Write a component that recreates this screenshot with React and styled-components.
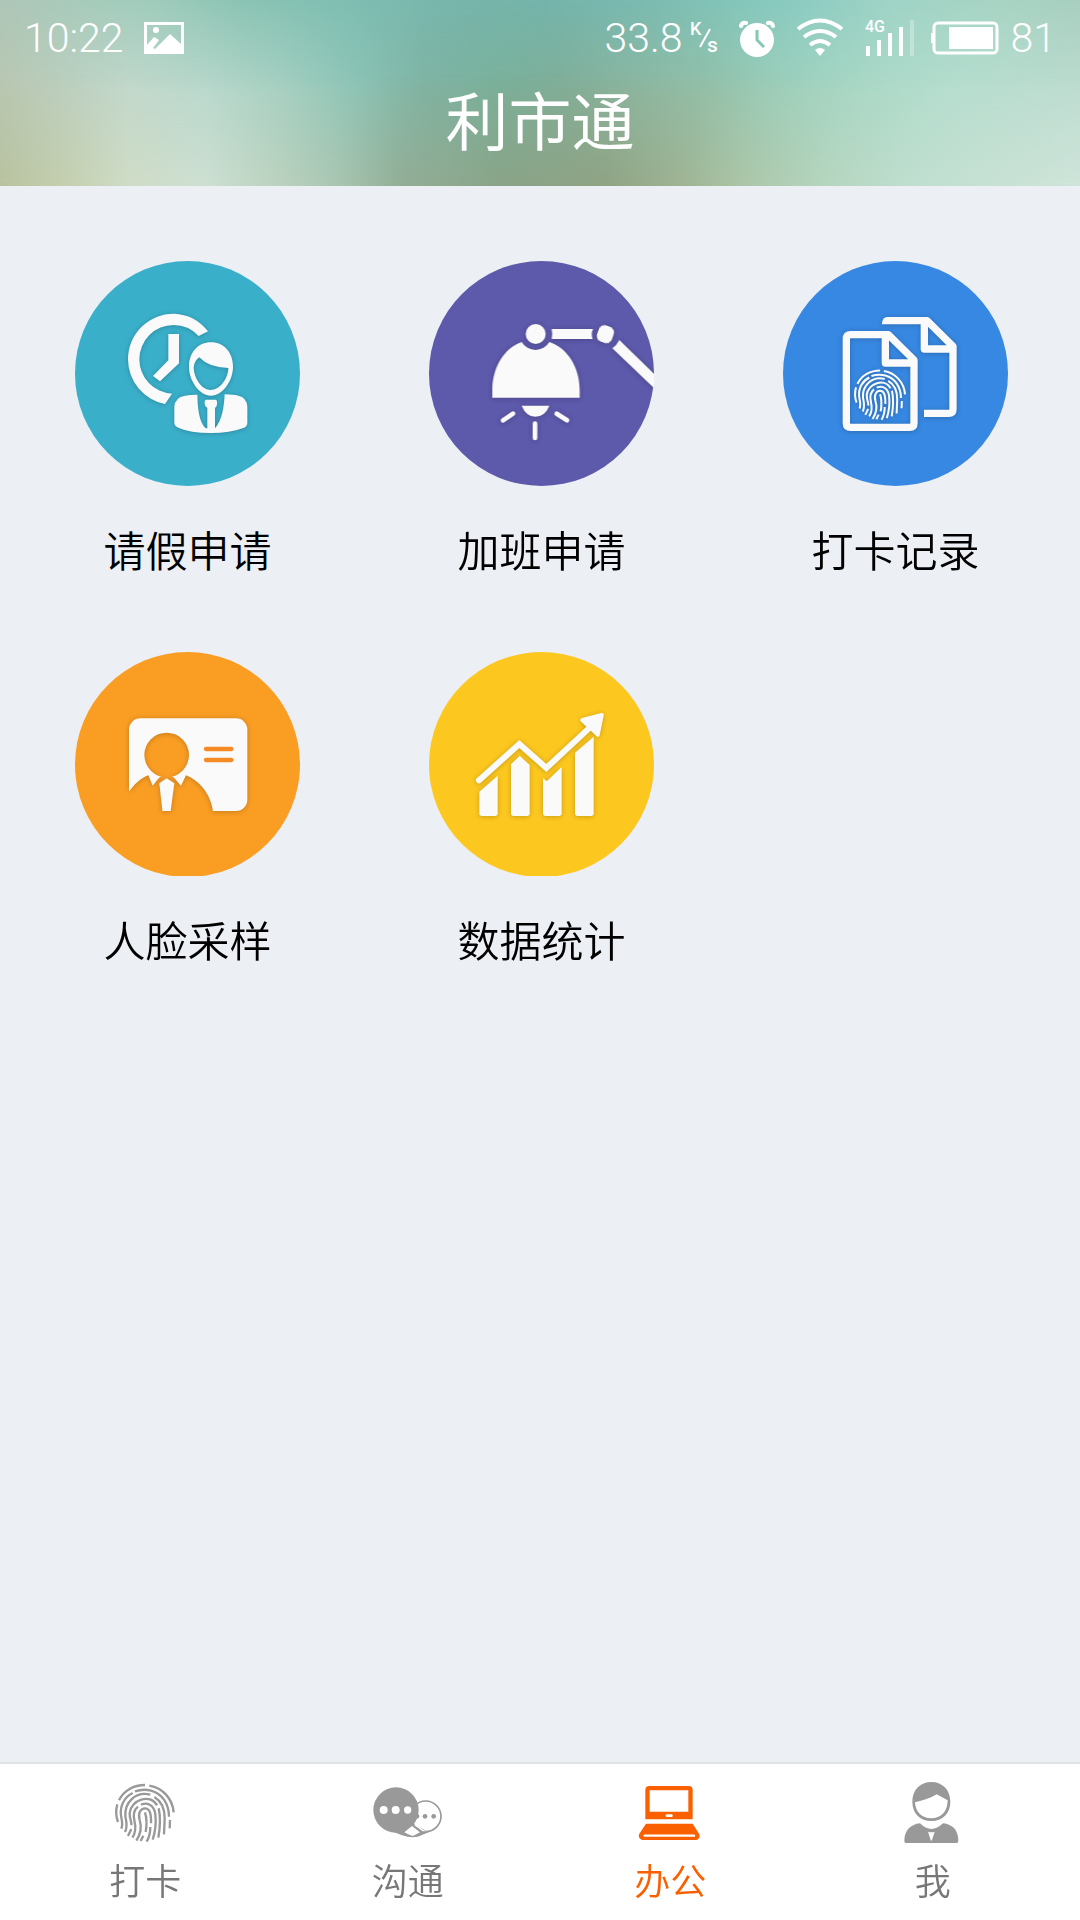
import React from 'react';
import styled, { createGlobalStyle } from 'styled-components';

const GlobalStyle = createGlobalStyle`
  *, *::before, *::after { box-sizing: border-box; }
  body {
    margin: 0;
    background: #eceff3;
    font-family: Roboto, "Noto Sans CJK SC", sans-serif;
    font-weight: 350;
  }
`;

const Screen = styled.div`
  display: flex;
  flex-direction: column;
  min-height: 100vh;
`;

const Header = styled.header`
  position: relative;
  isolation: isolate;
  padding-bottom: 14px;
  color: #fff;
  background: linear-gradient(90deg, #afc6b8 0%, #a8cbbb 7%, #a0ccbc 14%, #8cc4b4 22%, #80bfb3 31%, #78b6ac 41%, #74b4aa 50%, #7abab0 59%, #84c6ba 68%, #8cccc2 74%, #a0d4c6 83%, #a8d4c4 93%, #a8cfc0 100%);

  &::before, &::after {
    content: "";
    position: absolute;
    inset: 0;
    z-index: -1;
  }
  &::before {
    background: linear-gradient(90deg, #b9c7b1 0%, #bccfc0 6%, #c2d8cc 12%, #b8d8cc 19%, #a6d0c2 26%, #8cc4b6 33%, #80b4a4 39%, #7ab09a 46%, #80ae98 52%, #8ab49e 57%, #92bfa8 65%, #9cceba 72%, #aad8c6 80%, #b6decf 89%, #bcdccf 100%);
    mask-image: linear-gradient(180deg, transparent 0%, #000 50%);
  }
  &::after {
    background: linear-gradient(90deg, #b8c2a0 0%, #c4cfae 6%, #cfdcc6 12%, #cddfd2 19%, #bdd3c0 25%, #aac6b2 31%, #93ae96 37%, #8aa488 46%, #90a384 56%, #9fb393 63%, #acc6a8 69%, #b6d6c0 77%, #c0dfd0 85%, #c8e1d4 93%, #cfe4da 100%);
    mask-image: linear-gradient(180deg, transparent 40%, #000 100%);
  }
`;

const StatusBar = styled.div`
  display: flex;
  justify-content: space-between;
  align-items: center;
  height: 76px;
  padding: 0 24px;
  font-size: 41px;
  line-height: 48px;
  font-weight: 300;
`;

const StatusGroup = styled.div`
  display: flex;
  align-items: center;
  gap: ${(p) => p.$gap}px;
`;

const Glyph = styled.svg`
  display: block;
  flex: none;
  font-family: Roboto, sans-serif;
  font-weight: 500;
`;

const Title = styled.h1`
  margin: 0;
  text-align: center;
  font-size: 63px;
  line-height: 96px;
  font-weight: 400;
`;

const Content = styled.main`
  flex: 1;
  padding: 75px 72px 70px 75px;
`;

const TileGrid = styled.div`
  display: grid;
  grid-template-columns: repeat(3, 225px);
  justify-content: space-between;
  row-gap: 68px;
`;

const Tile = styled.button`
  display: flex;
  flex-direction: column;
  align-items: center;
  gap: 37px;
  padding: 0;
  border: 0;
  background: none;
  color: #000;
  font: inherit;
  font-size: 42px;
  line-height: 60px;
  cursor: pointer;
`;

const TileArt = styled.svg`
  display: block;
  width: 225px;
  height: 225px;
`;

const Mark = styled.g`
  filter: drop-shadow(0 2px 8px rgba(0, 0, 0, 0.22));
`;

const TabBar = styled.nav`
  display: grid;
  grid-template-columns: repeat(4, 1fr);
  padding: 17px 16px 13px 14px;
  border-top: 2px solid #e1e2e4;
  background: #fff;
`;

const Tab = styled.a`
  display: flex;
  flex-direction: column;
  align-items: center;
  gap: 14px;
  color: ${(p) => (p.$active ? '#fa6000' : '#777')};
  font-size: 36px;
  line-height: 48px;
  text-decoration: none;
`;

const TabArt = styled.svg`
  display: block;
  width: 70px;
  height: 64px;
`;

const ridges = [
  'M90 136 C104 106 135 90 168 90',
  'M181 92 C222 99 251 132 254 172',
  'M85 148 C80 165 81 185 87 201',
  'M97 221 C103 208 98 196 96 182 C92 150 108 125 131 114',
  'M138 109 C170 98 205 106 225 134 C236 150 240 165 240 185',
  'M243 195 L242 220',
  'M108 231 C117 214 112 200 109 184 C106 142 140 108 184 119',
  'M196 126 C220 140 227 165 227 190 L225 238',
  'M117 243 L127 222',
  'M127 211 C129 200 121 192 122 174 C126 134 184 114 204 151',
  'M209 160 C215 188 213 220 208 248',
  'M130 248 C142 232 140 213 136 196 C132 178 137 163 147 155',
  'M156 149 C180 139 196 155 199 178 C202 205 199 230 191 254',
  'M142 257 C156 236 158 214 152 195 C146 174 155 160 168 160 C182 160 187 176 186 205',
  'M184 216 C184 235 180 248 173 260',
  'M168 172 C173 188 174 208 170 231',
  'M163 242 L155 258',
];

const Fingerprint = () => (
  <g fill="none" stroke="currentColor" strokeWidth="7">
    {ridges.map((d) => <path key={d} d={d} />)}
  </g>
);

const Disc = ({ x, y = 370.5, color }) => <circle cx={x + 337.5} cy={y} r="337.5" fill={color} />;

const LeaveArt = () => (
  <TileArt viewBox="15 33 675 675" aria-hidden="true">
    <Disc x={15} color="#3aafca" />
    <Mark fill="#fafafa">
      <path d="M414 244 A137 137 0 0 0 311 191 A137 137 0 0 0 174 328 A137 137 0 0 0 285 462 L306 431 A103 103 0 0 1 208 328 A103 103 0 0 1 311 225 A103 103 0 0 1 386 258 Z" />
      <path d="M295 252 H327 V340 L270 394 L249 378 L295 331 Z" />
      <path fillRule="evenodd" d="M423 277 C462 277 489 308 489 350 C489 392 458 437 423 437 C388 437 357 392 357 350 C357 308 384 277 423 277 Z M388 322 Q415 352 475 354 C475 385 450 420 422 420 C395 420 372 385 371 352 Q374 330 388 322 Z" />
      <path d="M345 437 Q360 434 382 434 C383 470 386 515 407 535 H412 V474 Q404 469 404 461 V455 Q404 449 409 449 H436 Q441 449 441 455 V463 Q441 469 435 474 V535 C457 510 462 470 464 433 Q490 434 505 437 Q530 442 532 470 V518 Q532 530 520 534 Q480 549 423 549 Q360 549 325 533 Q313 528 313 518 V470 Q315 442 345 437 Z" />
    </Mark>
  </TileArt>
);

const OvertimeArt = () => (
  <TileArt viewBox="27 33 675 675" aria-hidden="true">
    <Disc x={27} color="#5d59ab" />
    <Mark fill="#fafafa">
      <circle cx="347" cy="252" r="30" />
      <path d="M217 443 V420 C217 350 255 292 305 276 A48 48 0 0 0 388 276 C440 292 479 350 479 420 V443 Z" />
      <path d="M395 237 H519 Q512 252 518 267 H395 Q398 252 395 237 Z" />
      <rect x="533" y="227" width="47" height="51" rx="17" transform="rotate(20 556 252)" />
      <path d="M577 295 Q590 286 598 270 L708 377 V420 Z" />
      <path d="M305 467 H388 Q375 500 346 500 Q318 500 305 467 Z" />
      <path d="M249 511 L279 491 M410 491 L441 511 M345 521 V564" fill="none" stroke="#fafafa" strokeWidth="14" strokeLinecap="round" />
    </Mark>
  </TileArt>
);

const RecordArt = () => (
  <TileArt viewBox="39 33 675 675" aria-hidden="true">
    <Disc x={39} color="#3788e2" />
    <Mark fill="none" stroke="#fafafa" strokeWidth="22" color="#fafafa">
      <path d="M355 254 H242 Q229 254 229 267 V519 Q229 532 242 532 H419 Q432 532 432 519 V330 Z M346 254 V339 H432" strokeLinejoin="round" />
      <path d="M336 223 Q336 201 352 201 H467 V223 Z" fill="#fafafa" stroke="none" />
      <path d="M460 212 H471 L549 289 V477 Q549 490 536 490 H462 M463 212 V297 H549" strokeLinejoin="round" />
      <g transform="translate(252 359) scale(0.87) translate(-78 -87)"><Fingerprint /></g>
    </Mark>
  </TileArt>
);

const FaceArt = () => (
  <TileArt viewBox="15 33 675 675" aria-hidden="true">
    <mask id="card-cutout" maskUnits="userSpaceOnUse" x="100" y="200" width="500" height="400">
      <rect x="100" y="200" width="500" height="400" fill="#fff" />
      <circle cx="290" cy="345" r="67" fill="#000" />
      <path d="M170 466 C192 430 215 414 235 406 L248 437 L267 413 L290 400 L312 413 L333 437 L348 406 C395 425 425 470 430 520 H170 Z" fill="#000" />
      <path d="M268 430 L290 415 L313 430 L301 520 H278 Z" fill="#fff" />
    </mask>
    <Disc x={15} y={373.5} color="#f99d23" />
    <Mark>
      <rect x="177" y="235" width="355" height="278" rx="34" fill="#fafafa" mask="url(#card-cutout)" />
    </Mark>
    <path d="M408 327 H484 M408 360 H484" stroke="#f58a25" strokeWidth="13" strokeLinecap="round" />
  </TileArt>
);

const StatsArt = () => (
  <TileArt viewBox="27 33 675 675" aria-hidden="true">
    <Disc x={27} y={373.5} color="#fcc71e" />
    <Mark fill="#fafafa">
      <path d="M178 455 L233 407 V520 Q233 528 225 528 H186 Q178 528 178 520 Z" />
      <path d="M273 373 L299 347 L329 375 V520 Q329 528 321 528 H281 Q273 528 273 520 Z" />
      <path d="M369 414 L380 424 L425 381 V520 Q425 528 417 528 H377 Q369 528 369 520 Z" />
      <path d="M465 338 L521 290 V520 Q521 528 513 528 H473 Q465 528 465 520 Z" />
      <path d="M177 421 L298 312 L379 384 L510 262" fill="none" stroke="#fafafa" strokeWidth="18" strokeLinecap="round" />
      <path d="M482 244 Q477 237 488 233 L544 219 Q553 218 551 227 L539 286 Q535 294 529 288 Z" />
    </Mark>
  </TileArt>
);

const FingerprintTabArt = () => (
  <TabArt viewBox="63 78 210 192" color="#999" aria-hidden="true"><Fingerprint /></TabArt>
);

const ChatTabArt = () => (
  <TabArt viewBox="851 78 210 192" fill="#999" aria-hidden="true">
    <circle cx="1009" cy="184" r="46" fill="#fff" stroke="#999" strokeWidth="5" />
    <circle cx="983" cy="184" r="7" />
    <circle cx="1007" cy="184" r="7" />
    <circle cx="1033" cy="184" r="7" />
    <circle cx="920" cy="165" r="68" />
    <path d="M905 226 Q950 252 985 245 L1018 232 L970 205 Z" />
    <path d="M945 232 L968 213 L992 232 Q978 240 970 243 Q955 238 945 232 Z" fill="#fff" />
    <path d="M982 205 Q992 222 1012 229 L1000 229 L975 211 Z" fill="#fff" />
    <g fill="#fff">
      <circle cx="883" cy="165" r="12" />
      <circle cx="919" cy="165" r="12" />
      <circle cx="955" cy="165" r="11" />
    </g>
  </TabArt>
);

const OfficeTabArt = () => (
  <TabArt viewBox="79 78 210 192" fill="#fa6000" aria-hidden="true">
    <path fillRule="evenodd" d="M110 193 V105 Q110 93 122 93 H240 Q252 93 252 105 V193 Z M123 106 V170 H239 V106 Z" />
    <rect x="171" y="178" width="21" height="8" rx="3" fill="#fff" />
    <path d="M112 206 H252 L271 236 Q277 248 264 255 H100 Q86 248 92 236 Z" />
    <path d="M108 242 H256" stroke="#fff" strokeWidth="7" strokeLinecap="round" />
  </TabArt>
);

const MeTabArt = () => (
  <TabArt viewBox="866 78 210 192" fill="#999" aria-hidden="true">
    <path fillRule="evenodd" d="M966 81 C1000 81 1023 105 1023 140 C1023 175 1000 198 966 198 C932 198 909 175 909 140 C909 105 932 81 966 81 Z M917 142 C918 170 937 190 966 190 C995 190 1015 170 1015 136 L982 118 Q960 132 917 142 Z" />
    <path d="M885 258 C885 225 905 208 932 205 Q966 239 1001 205 C1030 208 1047 225 1047 258 Q1047 264 1042 264 H890 Q885 264 885 258 Z" />
    <path d="M956 230 Q966 233 976 230 L968 255 Q966 259 964 255 Z" fill="#fff" />
  </TabArt>
);

const PhotoGlyph = () => (
  <Glyph width="40" height="32" viewBox="0 0 40 32" role="img" aria-label="图片">
    <path fillRule="evenodd" fill="#fff" d="M0 0 H40 V32 H0 Z M3 3 V23 L10 15 L15 18 L9 26 L11 27 L26 12 L37 22 V3 Z" />
    <circle cx="12" cy="8" r="3" fill="#fff" />
  </Glyph>
);

const RateGlyph = () => (
  <Glyph width="34" height="56" viewBox="0 0 34 56" fill="#fff" role="img" aria-label="K/s">
    <text x="1" y="25" fontSize="18">K</text>
    <path d="M11 37 L21 19" stroke="#fff" strokeWidth="2" />
    <text x="18" y="42" fontSize="21">s</text>
  </Glyph>
);

const AlarmGlyph = () => (
  <Glyph width="44" height="38" viewBox="0 0 44 38" fill="none" stroke="#fff" role="img" aria-label="闹钟">
    <circle cx="20" cy="21" r="17" fill="#fff" stroke="none" />
    <path d="M4 7 Q5 3 9 4 M31 4 Q35 3 36 7" strokeWidth="4" strokeLinecap="round" />
    <path d="M20 11 V21 L27 28" stroke="#85c6b4" strokeWidth="3" />
  </Glyph>
);

const WifiGlyph = () => (
  <Glyph width="56" height="40" viewBox="0 0 56 40" fill="none" stroke="#fff" strokeWidth="4" role="img" aria-label="Wi-Fi">
    <path d="M3 11 Q25 -6 47 11" />
    <path d="M9 19 Q25 7 41 19" />
    <path d="M15 27 Q25 19 35 27" />
    <path d="M20 32 Q25 28 30 32 L25 38 Z" fill="#fff" stroke="none" />
  </Glyph>
);

const SignalGlyph = () => (
  <Glyph width="52" height="56" viewBox="0 0 52 56" fill="#fff" role="img" aria-label="4G">
    <text x="0" y="22" fontSize="16">4G</text>
    <path d="M1 36 H5 V46 H1 Z M12 30 H16 V46 H12 Z M23 23 H27 V46 H23 Z M34 17 H38 V46 H34 Z" />
    <path d="M45 10 H49 V46 H45 Z" opacity="0.3" />
  </Glyph>
);

const BatteryGlyph = () => (
  <Glyph width="68" height="34" viewBox="0 0 68 34" role="img" aria-label="电池">
    <rect x="3" y="2" width="63" height="30" rx="4" fill="none" stroke="#fff" strokeWidth="3" />
    <path d="M0 12 H2 V22 H0 Z M18 6 H62 V28 H18 Z" fill="#fff" />
  </Glyph>
);

const tiles = [
  { label: '请假申请', Art: LeaveArt },
  { label: '加班申请', Art: OvertimeArt },
  { label: '打卡记录', Art: RecordArt },
  { label: '人脸采样', Art: FaceArt },
  { label: '数据统计', Art: StatsArt },
];

const tabs = [
  { label: '打卡', href: '#punch', Art: FingerprintTabArt },
  { label: '沟通', href: '#chat', Art: ChatTabArt },
  { label: '办公', href: '#office', Art: OfficeTabArt, active: true },
  { label: '我', href: '#me', Art: MeTabArt },
];

export default function App() {
  return (
    <Screen>
      <GlobalStyle />
      <Header>
        <StatusBar>
          <StatusGroup $gap={20}>
            <span>10:22</span>
            <PhotoGlyph />
          </StatusGroup>
          <StatusGroup $gap={14}>
            <StatusGroup $gap={6}>
              <span>33.8</span>
              <RateGlyph />
            </StatusGroup>
            <AlarmGlyph />
            <WifiGlyph />
            <SignalGlyph />
            <StatusGroup $gap={12}>
              <BatteryGlyph />
              <span>81</span>
            </StatusGroup>
          </StatusGroup>
        </StatusBar>
        <Title>利市通</Title>
      </Header>
      <Content>
        <TileGrid>
          {tiles.map(({ label, Art }) => (
            <Tile key={label} type="button">
              <Art />
              <span>{label}</span>
            </Tile>
          ))}
        </TileGrid>
      </Content>
      <TabBar>
        {tabs.map(({ label, href, Art, active }) => (
          <Tab key={label} href={href} $active={active} aria-current={active ? 'page' : undefined}>
            <Art />
            <span>{label}</span>
          </Tab>
        ))}
      </TabBar>
    </Screen>
  );
}
